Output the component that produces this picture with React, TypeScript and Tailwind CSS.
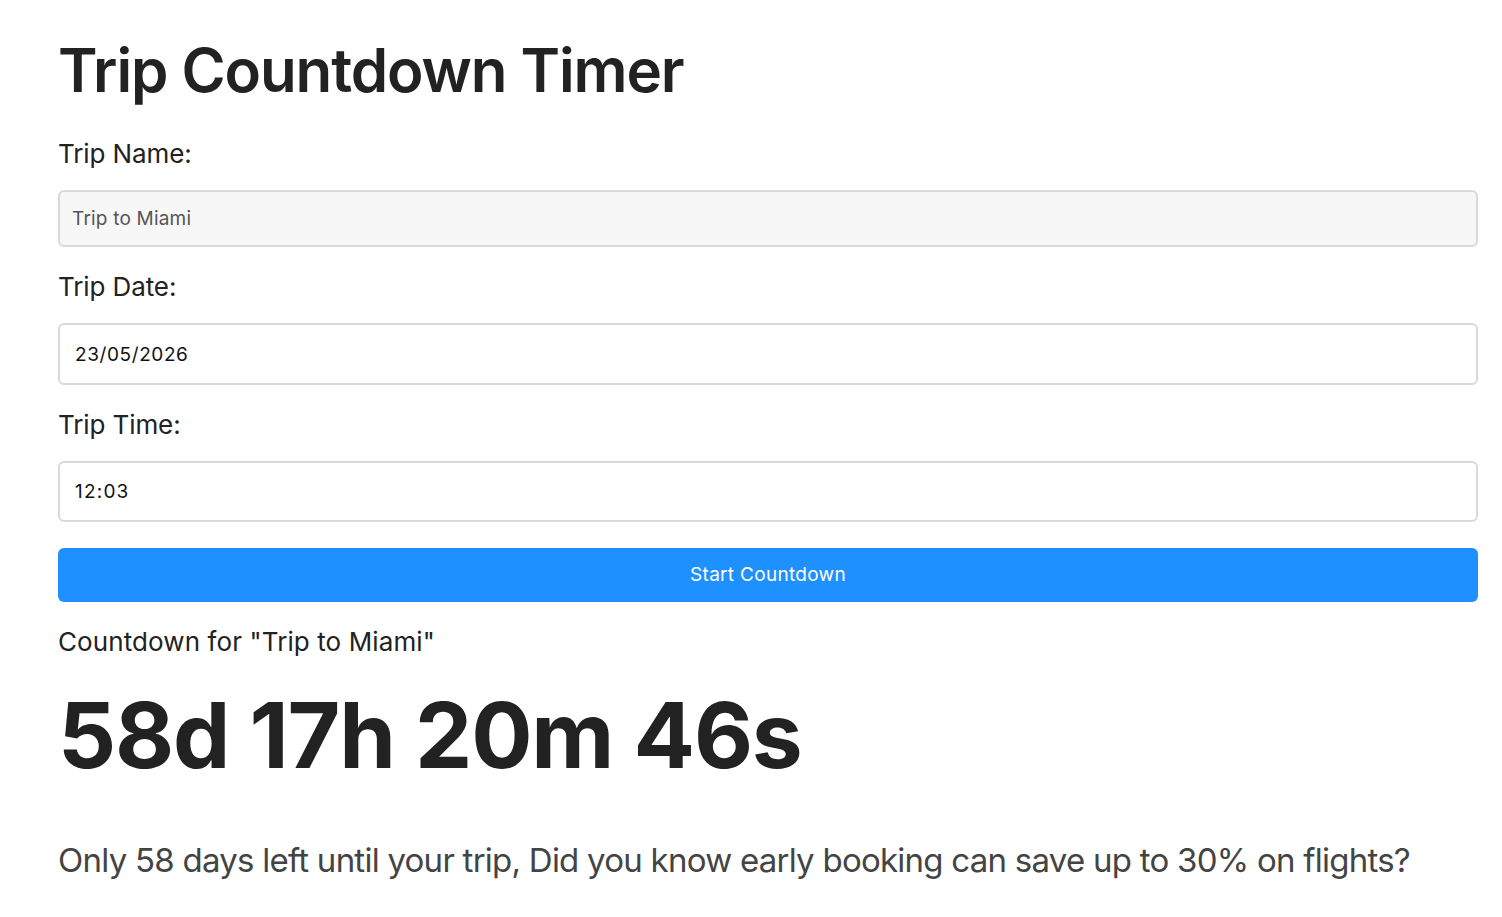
import React from 'react';

const App = () => {
  return (
    <div className="min-h-screen bg-white font-['Inter',sans-serif] text-[#222]">
      <div className="pl-[58px] pr-[24px] pt-[30px]">
        <h1 className="text-[60px] leading-[80px] font-semibold tracking-[-1.1px]">Trip Countdown Timer</h1>

        <label className="block mt-[26px] text-[26px] leading-[36px] tracking-[-0.1px]">Trip Name:</label>
        <input
          readOnly
          value="Trip to Miami"
          className="block w-full mt-[18px] h-[57px] px-[12px] rounded-[6px] border-2 border-[#d9d9d9] bg-[#f7f7f7] text-[19px] text-[#555] tracking-[0.2px] outline-none"
        />

        <label className="block mt-[22px] text-[26px] leading-[36px] tracking-[-0.1px]">Trip Date:</label>
        <input
          readOnly
          value="23/05/2026"
          className="block w-full mt-[18px] h-[62px] px-[15px] rounded-[6px] border-2 border-[#d9d9d9] bg-white text-[19px] text-[#111] tracking-[0.6px] outline-none"
        />

        <label className="block mt-[22px] text-[26px] leading-[36px] tracking-[-0.1px]">Trip Time:</label>
        <input
          readOnly
          value="12:03"
          className="block w-full mt-[18px] h-[61px] px-[15px] rounded-[6px] border-2 border-[#d9d9d9] bg-white text-[19px] text-[#111] tracking-[1.2px] outline-none"
        />

        <button className="block w-full mt-[26px] h-[54px] rounded-[6px] bg-[#1e90ff] text-white text-[19px] tracking-[0.3px]">
          Start Countdown
        </button>

        <p className="mt-[22px] text-[26px] leading-[36px] tracking-[0.1px]">Countdown for "Trip to Miami"</p>

        <div className="mt-[20px] text-[91px] leading-[110px] font-bold tracking-[-1.2px]">58d 17h 20m 46s</div>

        <p className="mt-[48px] text-[33px] leading-[44px] text-[#444] tracking-[-0.75px] whitespace-nowrap">
          Only 58 days left until your trip, Did you know early booking can save up to 30% on flights?
        </p>
      </div>
    </div>
  );
};

export default App;
